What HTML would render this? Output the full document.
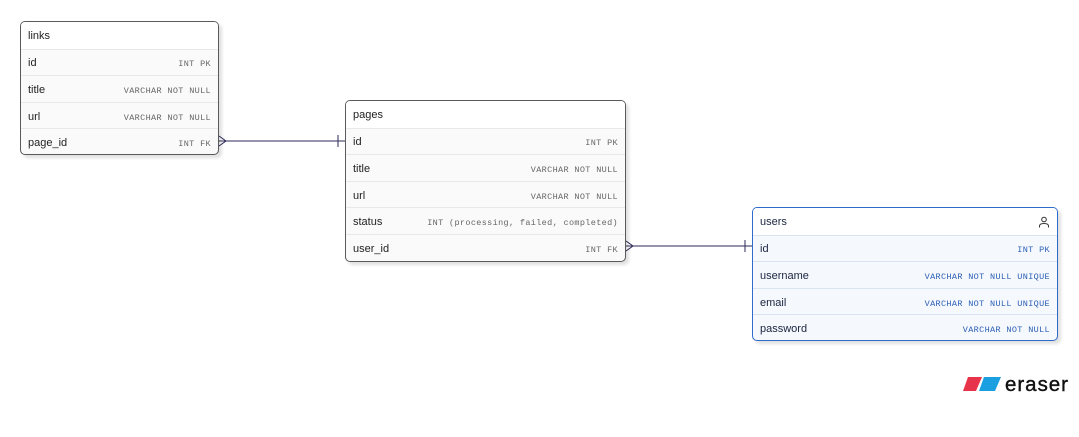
<!DOCTYPE html>
<html><head><style>
body{margin:0;width:1079px;height:437px;background:#fff;position:relative;overflow:hidden;font-family:"Liberation Sans",sans-serif;}
.t{position:absolute;border:1.5px solid #5a5a5a;border-radius:5px;background:#fafafa;box-shadow:3px 3px 3px rgba(0,0,0,.12);box-sizing:border-box;overflow:hidden}
.r{height:26.6px;border-top:1px solid #e8e8e8;display:flex;justify-content:space-between;align-items:center;padding:2px 7px 0 7px;box-sizing:border-box;font-size:11px;color:#222}
.r:first-child{border-top:none;background:#fff}
.r span{font-family:"Liberation Mono",monospace;font-size:8.5px;color:#666;letter-spacing:.35px;padding-top:2px}
.u{border-color:#2f6bcb;background:#f5f8fd}
.u .r{border-top-color:#d9e4f3;color:#1a2440}
.u .r span{color:#2b5fb5}
</style></head><body>
<svg width="1079" height="437" style="position:absolute;left:0;top:0">
<g stroke="#2d2a5a" stroke-width="1" fill="none">
<line x1="219" y1="141" x2="345" y2="141"/><line x1="338" y1="135" x2="338" y2="147"/>
<polyline points="219,136 226,141 219,146"/>
<line x1="626" y1="246" x2="752" y2="246"/><line x1="745" y1="240" x2="745" y2="252"/>
<polyline points="626,241 633,246 626,251"/>
</g>
<polygon points="968,377 982,377 976,391 963,391" fill="#e8344a"/>
<polygon points="984,377 1001,377 995,391 979,391" fill="#1a9fe0"/>
<text x="1005" y="391" font-family="Liberation Sans" font-size="20.5" fill="#111" stroke="#111" stroke-width="0.4" textLength="63">eraser</text>
</svg>
<div class="t" style="left:20px;top:21px;width:199px;height:134px">
<div class="r">links</div><div class="r">id<span>INT PK</span></div><div class="r">title<span>VARCHAR NOT NULL</span></div><div class="r">url<span>VARCHAR NOT NULL</span></div><div class="r">page_id<span>INT FK</span></div></div>
<div class="t" style="left:345px;top:100px;width:281px;height:162px">
<div class="r">pages</div><div class="r">id<span>INT PK</span></div><div class="r">title<span>VARCHAR NOT NULL</span></div><div class="r">url<span>VARCHAR NOT NULL</span></div><div class="r">status<span>INT (processing, failed, completed)</span></div><div class="r">user_id<span>INT FK</span></div></div>
<div class="t u" style="left:752px;top:207px;width:306px;height:134px">
<div class="r">users<svg width="12" height="12" viewBox="0 0 12 12"><circle cx="6" cy="3.5" r="2.3" fill="none" stroke="#333" stroke-width="1"/><path d="M1.5 11.5 V10 Q1.5 7.5 6 7.5 Q10.5 7.5 10.5 10 V11.5" fill="none" stroke="#333" stroke-width="1"/></svg></div><div class="r">id<span>INT PK</span></div><div class="r">username<span>VARCHAR NOT NULL UNIQUE</span></div><div class="r">email<span>VARCHAR NOT NULL UNIQUE</span></div><div class="r">password<span>VARCHAR NOT NULL</span></div></div>
</body></html>
